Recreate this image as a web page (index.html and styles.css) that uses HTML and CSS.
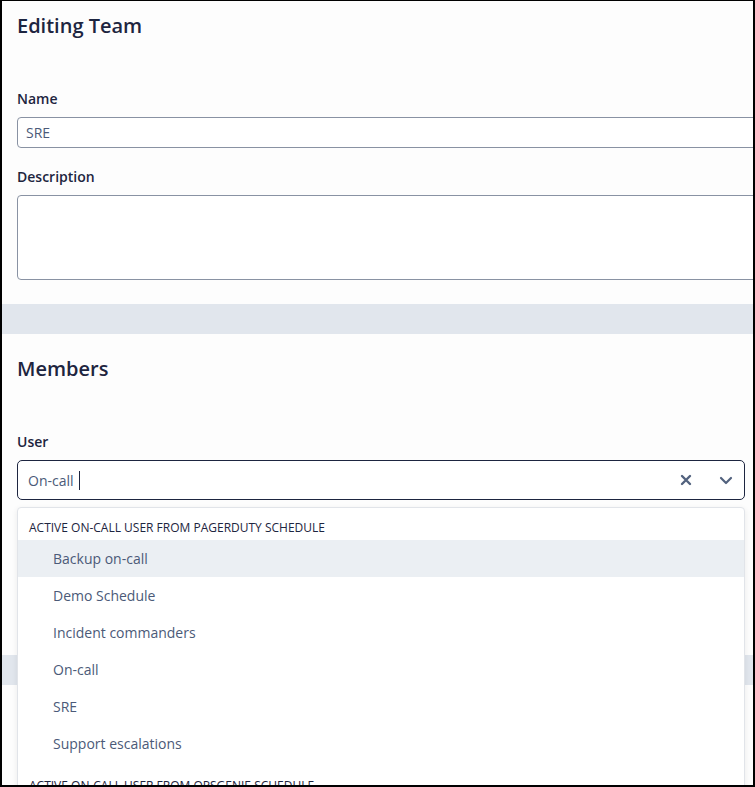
FILE: index.html
```html
<!DOCTYPE html>
<html lang="en">
<head>
  <meta charset="UTF-8">
  <meta name="viewport" content="width=device-width, initial-scale=1.0">
  <title>Editing Team</title>
  <link rel="stylesheet" href="styles.css">
</head>
<body>

  <div class="frame">
    <div class="panel panel-team">
      <h2>Editing Team</h2>

      <label class="field-label first" for="team-name">Name</label>
      <input class="text-input wide" type="text" id="team-name" value="SRE">

      <label class="field-label" for="team-description">Description</label>
      <textarea class="text-input wide area" id="team-description"></textarea>
    </div>

    <div class="band"></div>

    <div class="panel panel-members">
      <h2>Members</h2>

      <label class="field-label first" for="member-user">User</label>
      <div class="combo">
        <div class="combo-box">
          <span class="combo-value">On-call</span><span class="caret"></span>
          <span class="combo-icons">
            <svg class="icon-clear" width="12" height="12" viewBox="0 0 12 12">
              <path d="M2 2 L10 10 M10 2 L2 10" stroke="#52627e" stroke-width="2.4" stroke-linecap="round" fill="none"/>
            </svg>
            <svg class="icon-chevron" width="14" height="9" viewBox="0 0 14 9">
              <path d="M2 2 L7 7 L12 2" stroke="#52627e" stroke-width="2.2" stroke-linecap="round" stroke-linejoin="round" fill="none"/>
            </svg>
          </span>
        </div>

        <div class="menu">
          <div class="group">
            <div class="group-title">Active on-call user from PagerDuty schedule</div>
            <div class="option active">Backup on-call</div>
            <div class="option">Demo Schedule</div>
            <div class="option">Incident commanders</div>
            <div class="option">On-call</div>
            <div class="option">SRE</div>
            <div class="option">Support escalations</div>
          </div>
          <div class="group">
            <div class="group-title">Active on-call user from Opsgenie schedule</div>
            <div class="option">Primary</div>
          </div>
        </div>
      </div>
    </div>

    <div class="band"></div>

    <div class="panel panel-rest"></div>
  </div>

</body>
</html>
```

FILE: styles.css
```css
* {
  margin: 0;
  padding: 0;
  box-sizing: border-box;
}

body {
  font-family: 'Open Sans', 'Noto Sans', sans-serif;
  background-color: #fff;
  color: #1d2540;
}

.frame {
  position: relative;
  width: 755px;
  height: 787px;
  border-style: solid;
  border-color: #000;
  border-width: 1px 2px 2px 2px;
  background-color: #fdfdfd;
  overflow: hidden;
}

.panel {
  padding: 0 8px 0 15px;
}

.panel-team {
  padding-top: 11px;
  padding-bottom: 24px;
}

.panel-members {
  padding-top: 21px;
  padding-bottom: 155px;
}

.panel-rest {
  height: 120px;
}

h2 {
  font-size: 20px;
  line-height: 28px;
  font-weight: 600;
  color: #1d2540;
}

.field-label {
  display: block;
  font-size: 14px;
  line-height: 20px;
  font-weight: 600;
  color: #1d2540;
  margin: 19px 0 8px;
}

.field-label.first {
  margin-top: 49px;
}

.text-input {
  display: block;
  height: 31px;
  padding: 0 8px;
  font-family: inherit;
  font-size: 14px;
  color: #4b5a78;
  background-color: #fff;
  border: 1px solid #8992a3;
  border-radius: 4px;
  outline: none;
}

.wide {
  width: 760px;
}

.area {
  height: 85px;
  resize: none;
}

.band {
  height: 30px;
  margin-left: -2px;
  background-color: #e1e6ed;
}

.combo {
  position: relative;
}

.combo-box {
  display: flex;
  align-items: center;
  height: 40px;
  padding: 0 10px;
  background-color: #fff;
  border: 1px solid #1d2540;
  border-radius: 5px;
}

.combo-value {
  font-size: 14px;
  color: #4b5a78;
}

.caret {
  display: inline-block;
  width: 1px;
  height: 19px;
  margin-left: 5px;
  background-color: #1d2540;
}

.combo-icons {
  display: flex;
  align-items: center;
  gap: 27px;
  margin-left: auto;
  margin-right: 1px;
}

.menu {
  position: absolute;
  top: calc(100% + 7px);
  left: 0;
  right: 0;
  background-color: #fff;
  border: 1px solid #e1e4e9;
  border-radius: 4px;
  box-shadow: 0 2px 6px rgba(0, 0, 0, 0.08);
}

.group + .group {
  margin-top: 4px;
}

.group-title {
  padding: 12px 12px 4px 11px;
  font-size: 12px;
  line-height: 16px;
  text-transform: uppercase;
  color: #1d2540;
}

.option {
  padding: 8px 35px;
  font-size: 14px;
  line-height: 21px;
  color: #4b5a78;
}

.option.active {
  background-color: #ebeff3;
}
```
